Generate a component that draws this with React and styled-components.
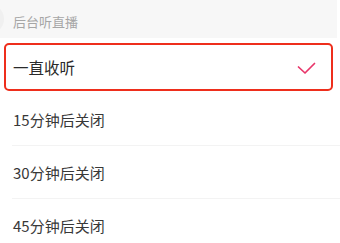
import React from "react";
import styled, { createGlobalStyle } from "styled-components";

const Global = createGlobalStyle`
  html, body { margin: 0; padding: 0; background: #fff; }
  body { font-family: "Noto Sans CJK SC", "Noto Sans", sans-serif; }
`;

const Page = styled.div`
  width: 340px;
  height: 243px;
  overflow: hidden;
  background: #fff;
`;

const Header = styled.div`
  position: relative;
  height: 38px;
  width: 337px;
  background: #f7f7f7;
  display: flex;
  align-items: center;
  padding-left: 13px;
  box-sizing: border-box;
  font-size: 13px;
  color: #a6a6a6;
  overflow: hidden;
  &::before {
    content: "";
    position: absolute;
    left: -30px;
    top: 3px;
    width: 34px;
    height: 32px;
    border-radius: 50%;
    background: #f0f0f0;
  }
`;

const HeaderText = styled.span`
  position: relative;
  line-height: 1;
  margin-top: 5px;
`;

const List = styled.div`
  display: flex;
  flex-direction: column;
  padding-top: 5px;
`;

const Selected = styled.div`
  margin: 0 7px 2px 4px;
  height: 48px;
  box-sizing: border-box;
  border: 2px solid #ee2e1c;
  border-radius: 5px;
  display: flex;
  align-items: center;
  justify-content: space-between;
  padding: 0 15px 0 7px;
  font-size: 15.5px;
  color: #2a2a2a;
`;

const Row = styled.div`
  height: 53px;
  display: flex;
  align-items: center;
  margin-left: 12px;
  padding-left: 1px;
  font-size: 15px;
  color: #383838;
  border-bottom: ${(p) => (p.$last ? "none" : "1px solid #f3f3f3")};
  box-sizing: border-box;
`;

const Check = () => (
  <svg width="20" height="14" viewBox="0 0 20 14" style={{ marginTop: 1 }}>
    <polyline
      points="2.5,6 9,12 18.5,2.5"
      fill="none"
      stroke="#e8366a"
      strokeWidth="1.7"
      strokeLinecap="round"
      strokeLinejoin="round"
    />
  </svg>
);

const items = ["15分钟后关闭", "30分钟后关闭", "45分钟后关闭"];

export default function App() {
  return (
    <Page>
      <Global />
      <Header>
        <HeaderText>后台听直播</HeaderText>
      </Header>
      <List>
        <Selected>
          <span>一直收听</span>
          <Check />
        </Selected>
        {items.map((t, i) => (
          <Row key={t} $last={i === items.length - 1}>
            {t}
          </Row>
        ))}
      </List>
    </Page>
  );
}
